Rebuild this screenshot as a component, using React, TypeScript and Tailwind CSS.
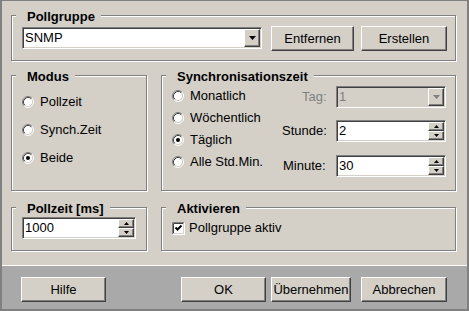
import type { ReactNode } from "react";

const raised =
  "border border-t-white border-l-white border-r-[#404040] border-b-[#404040] shadow-[inset_-1px_-1px_0_#808080] bg-[#d4d0c8]";
const sunken =
  "border border-t-[#808080] border-l-[#808080] border-r-white border-b-white shadow-[inset_1px_1px_0_#404040,inset_-1px_-1px_0_#d4d0c8] p-[1px]";

function Group({ title, className, children }: { title: string; className: string; children?: ReactNode }) {
  return (
    <div className={`relative border border-[#808080] shadow-[inset_1px_1px_0_#fff,1px_1px_0_#fff] ${className}`}>
      <span className="absolute left-[4px] top-[-7px] bg-[#d4d0c8] pl-[11px] pr-[6px] font-bold leading-[16px]">
        {title}
      </span>
      {children}
    </div>
  );
}

function Radio({ checked }: { checked?: boolean }) {
  return (
    <svg width="12" height="12" viewBox="0 0 12 12" className="shrink-0">
      <circle cx="6" cy="6" r="4.5" fill="#fff" />
      <path d="M2.11 9.89A5.5 5.5 0 0 1 9.89 2.11" fill="none" stroke="#808080" />
      <path d="M9.89 2.11A5.5 5.5 0 0 1 2.11 9.89" fill="none" stroke="#fff" />
      <path d="M2.82 9.18A4.5 4.5 0 0 1 9.18 2.82" fill="none" stroke="#404040" />
      <path d="M9.18 2.82A4.5 4.5 0 0 1 2.82 9.18" fill="none" stroke="#d4d0c8" />
      {checked && <circle cx="6" cy="6" r="2" fill="#000" />}
    </svg>
  );
}

function Option({ label, checked }: { label: string; checked?: boolean }) {
  return (
    <div className="flex items-center gap-[6px]">
      <Radio checked={checked} />
      <span>{label}</span>
    </div>
  );
}

function Arrow({ up, small, disabled }: { up?: boolean; small?: boolean; disabled?: boolean }) {
  const w = small ? 5 : 7;
  const h = small ? 3 : 4;
  const pts = up ? `0,${h} ${w},${h} ${w / 2},0` : `0,0 ${w},0 ${w / 2},${h}`;
  return (
    <svg width={w} height={h} viewBox={`0 0 ${w} ${h}`}>
      <polygon points={pts} fill={disabled ? "#808080" : "#000"} />
    </svg>
  );
}

function Combo({ value, width, disabled }: { value: string; width: string; disabled?: boolean }) {
  return (
    <div className={`flex h-[22px] ${width} ${sunken} ${disabled ? "bg-[#d4d0c8]" : "bg-white"}`}>
      <span className={`flex-1 pl-[1px] leading-[18px] ${disabled ? "text-[#808080]" : ""}`}>{value}</span>
      <div className={`flex h-[18px] w-[16px] items-center justify-center ${raised}`}>
        <Arrow disabled={disabled} />
      </div>
    </div>
  );
}

function Spin({ value, width }: { value: string; width: string }) {
  return (
    <div className={`flex h-[22px] ${width} ${sunken} bg-white`}>
      <span className="flex-1 pl-[1px] leading-[18px]">{value}</span>
      <div className="flex w-[16px] flex-col">
        <div className={`flex h-[9px] items-center justify-center ${raised}`}>
          <Arrow up small />
        </div>
        <div className={`flex h-[9px] items-center justify-center ${raised}`}>
          <Arrow small />
        </div>
      </div>
    </div>
  );
}

function Button({ label, width }: { label: string; width: string }) {
  return (
    <div className={`flex h-[25px] ${width} items-center justify-center ${raised}`}>{label}</div>
  );
}

export default function App() {
  return (
    <div className="flex h-[311px] w-[469px] flex-col border-b-2 border-l-2 border-r-2 border-t border-[#808080] bg-[#d4d0c8] font-['Liberation_Sans',Arial,sans-serif] text-[13px] text-black">
      <div className="h-[264px] pl-[9px] pt-[14px]">
        <Group title="Pollgruppe" className="h-[46px] w-[445px]">
          <div className="flex items-start pl-[10px] pt-[10px]">
            <div className="mt-[1px]">
              <Combo value="SNMP" width="w-[240px]" />
            </div>
            <div className="ml-[9px]">
              <Button label="Entfernen" width="w-[83px]" />
            </div>
            <div className="ml-[7px]">
              <Button label="Erstellen" width="w-[86px]" />
            </div>
          </div>
        </Group>

        <div className="mt-[14px] flex gap-[14px]">
          <Group title="Modus" className="h-[116px] w-[136px]">
            <div className="flex flex-col pl-[10px] pt-[12px]">
              <div className="flex h-[28px] items-center"><Option label="Pollzeit" /></div>
              <div className="flex h-[28px] items-center"><Option label="Synch.Zeit" /></div>
              <div className="flex h-[28px] items-center"><Option label="Beide" checked /></div>
            </div>
          </Group>
          <Group title="Synchronisationszeit" className="h-[116px] w-[295px]">
            <div className="flex pl-[10px] pt-[9px]">
              <div className="flex w-[110px] flex-col">
                <div className="flex h-[22px] items-center"><Option label="Monatlich" /></div>
                <div className="flex h-[22px] items-center"><Option label="Wöchentlich" /></div>
                <div className="flex h-[22px] items-center"><Option label="Täglich" checked /></div>
                <div className="flex h-[22px] items-center"><Option label="Alle Std.Min." /></div>
              </div>
              <div className="flex w-[164px] flex-col">
                <div className="mt-[1px] flex items-center justify-between">
                  <span className="ml-[20px] text-[#808080]">Tag:</span>
                  <Combo value="1" width="w-[110px]" disabled />
                </div>
                <div className="mt-[12px] flex items-center justify-between">
                  <span>Stunde:</span>
                  <Spin value="2" width="w-[110px]" />
                </div>
                <div className="mt-[13px] flex items-center justify-between">
                  <span className="ml-[1px]">Minute:</span>
                  <Spin value="30" width="w-[110px]" />
                </div>
              </div>
            </div>
          </Group>
        </div>

        <div className="mt-[16px] flex gap-[14px]">
          <Group title="Pollzeit [ms]" className="h-[44px] w-[136px]">
            <div className="pl-[10px] pt-[9px]">
              <Spin value="1000" width="w-[114px]" />
            </div>
          </Group>
          <Group title="Aktivieren" className="h-[44px] w-[295px]">
            <div className="flex h-[16px] items-center gap-[4px] pl-[10px] mt-[12px]">
              <svg width="13" height="13" viewBox="0 0 13 13" className="shrink-0">
                <rect x="0" y="0" width="13" height="13" fill="#fff" />
                <path d="M0.5 12.5V0.5H12.5" fill="none" stroke="#808080" />
                <path d="M12.5 0.5V12.5H0.5" fill="none" stroke="#fff" />
                <path d="M1.5 11.5V1.5H11.5" fill="none" stroke="#404040" />
                <path d="M11.5 1.5V11.5H1.5" fill="none" stroke="#d4d0c8" />
                <path d="M3.5 5.5L5.5 7.5L9.5 3.5" fill="none" stroke="#000" strokeWidth="2" />
              </svg>
              <span>Pollgruppe aktiv</span>
            </div>
          </Group>
        </div>
      </div>

      <div className="flex flex-1 items-start border-t border-white bg-[#a9a9a9] pl-[19px] pt-[11px]">
        <Button label="Hilfe" width="w-[85px]" />
        <div className="ml-[75px] flex gap-[5px]">
          <Button label="OK" width="w-[85px]" />
          <Button label="Übernehmen" width="w-[80px]" />
        </div>
        <div className="ml-[10px]">
          <Button label="Abbrechen" width="w-[86px]" />
        </div>
      </div>
    </div>
  );
}
